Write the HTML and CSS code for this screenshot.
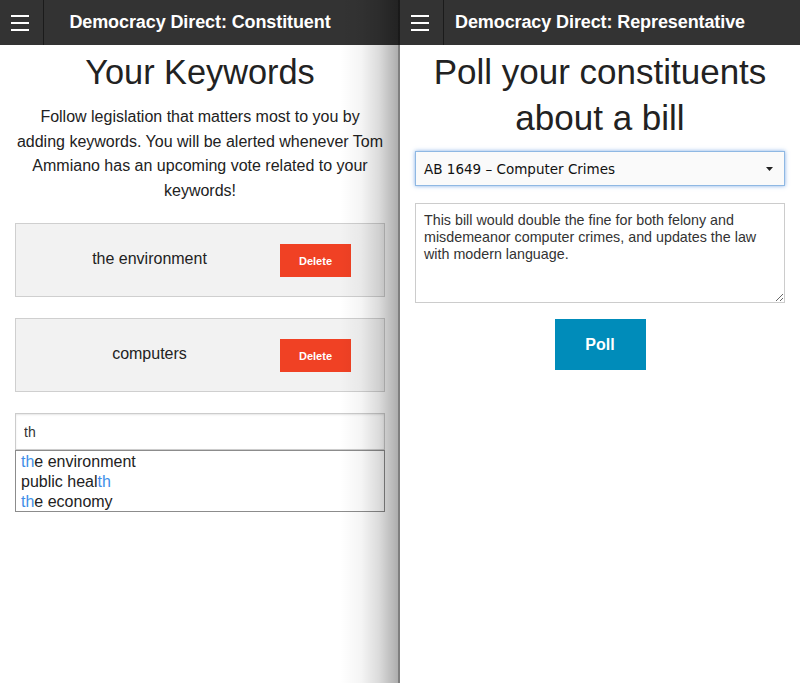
FILE: index.html
```html
<!DOCTYPE html>
<html>
<head>
<meta charset="utf-8">
<link rel="stylesheet" href="styles.css">
</head>
<body>
<div class="screens">
  <section class="pane pane-left">
    <header class="topbar">
      <div class="menu-btn">
        <svg width="18" height="16" viewBox="0 0 18 16"><rect x="0" y="0" width="18" height="2" fill="#fff"/><rect x="0" y="7" width="18" height="2" fill="#fff"/><rect x="0" y="14" width="18" height="2" fill="#fff"/></svg>
      </div>
      <div class="title">Democracy Direct: Constituent</div>
    </header>
    <main class="content">
      <h1 class="heading heading-keywords">Your Keywords</h1>
      <p class="intro">Follow legislation that matters most to you by adding keywords. You will be alerted whenever Tom Ammiano has an upcoming vote related to your keywords!</p>
      <div class="card">
        <span class="keyword">the environment</span>
        <button class="delete">Delete</button>
      </div>
      <div class="card">
        <span class="keyword">computers</span>
        <button class="delete">Delete</button>
      </div>
      <div class="search">
        <input class="search-input" type="text" value="th">
        <ul class="suggestions">
          <li><span class="match">th</span>e environment</li>
          <li>public heal<span class="match">th</span></li>
          <li><span class="match">th</span>e economy</li>
        </ul>
      </div>
    </main>
    <div class="shade"></div>
  </section>
  <section class="pane pane-right">
    <header class="topbar">
      <div class="menu-btn">
        <svg width="18" height="16" viewBox="0 0 18 16"><rect x="0" y="0" width="18" height="2" fill="#fff"/><rect x="0" y="7" width="18" height="2" fill="#fff"/><rect x="0" y="14" width="18" height="2" fill="#fff"/></svg>
      </div>
      <div class="title">Democracy Direct: Representative</div>
    </header>
    <main class="content">
      <h1 class="heading heading-poll">Poll your constituents about a bill</h1>
      <div class="select">
        <span>AB 1649 – Computer Crimes</span>
        <svg width="7" height="4" viewBox="0 0 7 4"><polygon points="0,0 7,0 3.5,4" fill="#222"/></svg>
      </div>
      <textarea class="desc">This bill would double the fine for both felony and misdemeanor computer crimes, and updates the law with modern language.</textarea>
      <div class="actions">
        <button class="poll">Poll</button>
      </div>
    </main>
  </section>
</div>
</body>
</html>
```

FILE: styles.css
```css
html, body {
  margin: 0;
  padding: 0;
  background: #fff;
}
body {
  font-family: "Liberation Sans", Helvetica, Arial, sans-serif;
  color: #222;
}
.screens {
  display: flex;
  width: 800px;
  height: 683px;
}
.pane {
  position: relative;
  width: 400px;
  height: 683px;
  overflow: hidden;
  background: #fff;
}
.topbar {
  position: relative;
  height: 45px;
  background: #333;
  display: flex;
  align-items: center;
}
.menu-btn {
  position: absolute;
  left: 0;
  top: 0;
  width: 44px;
  height: 45px;
  border-right: 1px solid #1b1b1b;
  display: flex;
  align-items: center;
  justify-content: center;
  box-sizing: border-box;
  padding-right: 3px;
}
.title {
  width: 100%;
  text-align: center;
  color: #fff;
  font-weight: bold;
  font-size: 18px;
  letter-spacing: -0.1px;
}
.content {
  padding: 0 15px;
}
.heading {
  margin: 5px 0 0;
  font-size: 35px;
  font-weight: normal;
  line-height: 44px;
  text-align: center;
  color: #222;
}
.heading-keywords {
  font-size: 34.3px;
}
.heading-poll {
  line-height: 46px;
  margin-top: 4px;
  padding: 0 10px;
}
.intro {
  margin: 11px 0 20px;
  font-size: 16px;
  line-height: 24.5px;
  text-align: center;
  color: #222;
}
.card {
  display: grid;
  grid-template-columns: 264px 71px;
  align-items: center;
  height: 72px;
  border: 1px solid #cfcfcf;
  background: #f2f2f2;
  margin-bottom: 21px;
}
.keyword {
  font-size: 16px;
  color: #222;
  text-align: center;
  padding-left: 3px;
  margin-top: -2px;
}
.delete {
  width: 71px;
  height: 33px;
  border: none;
  background: #f04124;
  color: #fff;
  font-family: "Liberation Sans", Helvetica, Arial, sans-serif;
  font-size: 11px;
  font-weight: bold;
  padding: 0;
  margin-top: 1px;
}
.search {
  width: 370px;
}
.search-input {
  display: block;
  box-sizing: border-box;
  width: 370px;
  height: 37px;
  margin: 0;
  border: 1px solid #cccccc;
  box-shadow: inset 0 1px 2px rgba(0,0,0,0.1);
  padding: 0 8px;
  font-family: "Liberation Sans", Helvetica, Arial, sans-serif;
  font-size: 14px;
  color: #333;
  outline: none;
}
.suggestions {
  list-style: none;
  margin: 0;
  padding: 1px 5px 0;
  border: 1px solid #8c8c8c;
  height: 59px;
  box-sizing: content-box;
}
.suggestions li {
  font-size: 16px;
  line-height: 20px;
  color: #222;
}
.match {
  color: #3d8ee8;
}
.shade {
  position: absolute;
  top: 0;
  right: 0;
  width: 60px;
  height: 683px;
  background: linear-gradient(to right, rgba(0,0,0,0) 0%, rgba(0,0,0,0.04) 35%, rgba(0,0,0,0.14) 65%, rgba(0,0,0,0.32) 97%, rgba(0,0,0,0.5) 97%, rgba(0,0,0,0.5) 100%);
  pointer-events: none;
}
.select {
  margin-top: 10px;
  box-sizing: border-box;
  height: 35px;
  border: 1px solid #8fb8e3;
  box-shadow: 0 0 4px rgba(80,140,220,0.7);
  background: #fafafa;
  display: flex;
  align-items: center;
  justify-content: space-between;
  padding: 0 11px 0 8px;
  font-family: "DejaVu Sans", "Lucida Grande", sans-serif;
  font-size: 13.5px;
  color: #111;
}
.desc {
  display: block;
  box-sizing: border-box;
  width: 370px;
  height: 100px;
  margin: 17px 0 0;
  border: 1px solid #cccccc;
  padding: 8px 8px;
  font-family: "Liberation Sans", Helvetica, Arial, sans-serif;
  font-size: 14.3px;
  line-height: 17px;
  color: #333;
  outline: none;
}
.actions {
  display: flex;
  justify-content: center;
  margin-top: 16px;
}
.poll {
  width: 91px;
  height: 51px;
  border: none;
  background: #008cba;
  color: #fff;
  font-family: "Liberation Sans", Helvetica, Arial, sans-serif;
  font-size: 16px;
  font-weight: bold;
  padding: 0;
}
```
